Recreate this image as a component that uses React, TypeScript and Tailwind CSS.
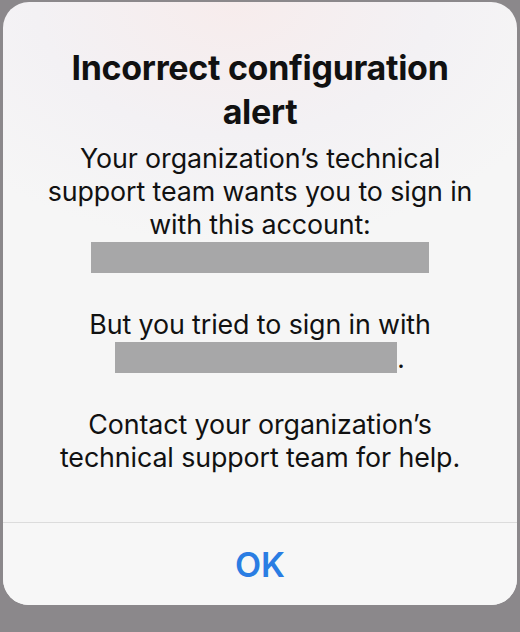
import React from 'react'

const Redacted: React.FC<{ w: number; dot?: boolean }> = ({ w, dot }) => (
  <div className="flex h-[33px] items-center justify-center">
    <div className="relative h-[31px] bg-[#a7a7a8]" style={{ width: w }} />
    {dot && <span className="self-end pb-[2px] text-[26px] leading-[26px]">.</span>}
  </div>
)

export default function App() {
  return (
    <div className="h-[632px] w-[520px] bg-[#8b888b] px-[3px] pt-[2px] font-['Inter','Liberation_Sans',sans-serif] text-[#111]">
      <div className="flex h-[603px] flex-col overflow-hidden rounded-[26px] bg-[radial-gradient(ellipse_70%_40%_at_45%_0%,#f7ecec_0%,#f3f1f4_55%,#f6f6f6_100%)]">
        <div className="flex-1 px-4 pt-[44px] text-center">
          <h1 className="text-[34px] font-bold leading-[44px] tracking-[-0.3px]">
            Incorrect configuration
            <br />
            alert
          </h1>
          <div className="mt-[8px] text-[26.8px] leading-[33px] tracking-[-0.1px]">
            <p>
              Your organization’s technical
              <br />
              support team wants you to sign in
              <br />
              with this account:
            </p>
            <Redacted w={338} />
            <p className="mt-[34px]">But you tried to sign in with</p>
            <Redacted w={282} dot />
            <p className="mt-[34px]">
              Contact your organization’s
              <br />
              technical support team for help.
            </p>
          </div>
        </div>
        <div className="border-t border-[#dcdcdc] bg-[#f7f7f7]">
          <button className="flex h-[82px] w-full items-center justify-center text-[34px] font-semibold text-[#2a7de3]">
            OK
          </button>
        </div>
      </div>
    </div>
  )
}
